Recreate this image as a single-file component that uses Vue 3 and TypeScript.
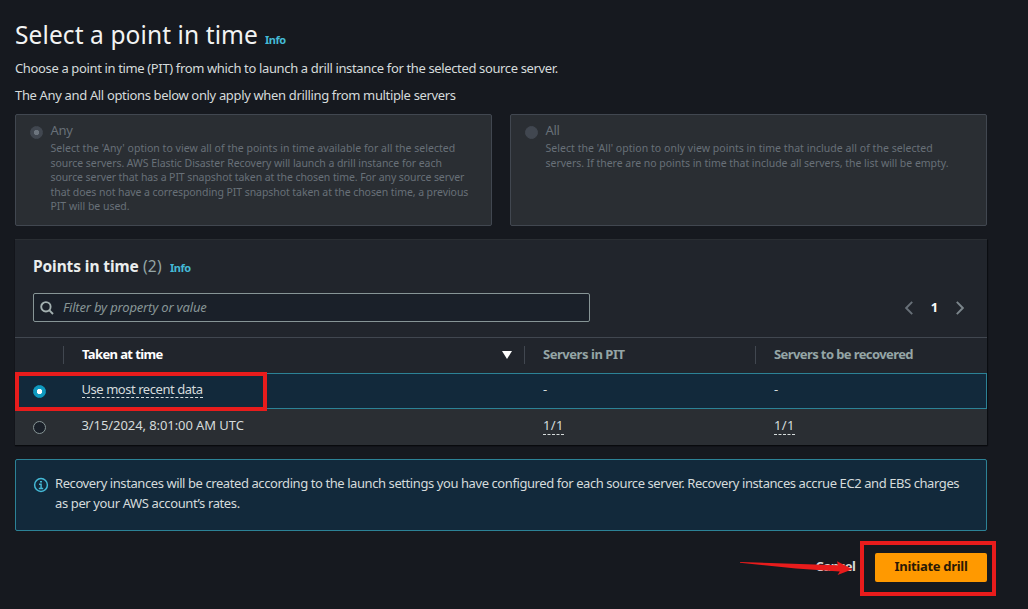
<script setup lang="ts">
interface Line {
  text: string
  tracking: number
}
interface Tile {
  id: string
  label: string
  checked: boolean
  lines: Line[]
}
interface Row {
  time: string
  inPit: string
  recovered: string
  selected: boolean
}

const tiles: Tile[] = [
  {
    id: 'any',
    label: 'Any',
    checked: true,
    lines: [
      { text: "Select the 'Any' option to view all of the points in time available for all the selected", tracking: 0.03 },
      { text: 'source servers. AWS Elastic Disaster Recovery will launch a drill instance for each', tracking: -0.05 },
      { text: 'source server that has a PIT snapshot taken at the chosen time. For any source server', tracking: -0.085 },
      { text: 'that does not have a corresponding PIT snapshot taken at the chosen time, a previous', tracking: -0.07 },
      { text: 'PIT will be used.', tracking: -0.02 },
    ],
  },
  {
    id: 'all',
    label: 'All',
    checked: false,
    lines: [
      { text: "Select the 'All' option to only view points in time that include all of the selected", tracking: 0.04 },
      { text: 'servers. If there are no points in time that include all servers, the list will be empty.', tracking: -0.03 },
    ],
  },
]

const rows: Row[] = [
  { time: 'Use most recent data', inPit: '-', recovered: '-', selected: true },
  { time: '3/15/2024, 8:01:00 AM UTC', inPit: '1/1', recovered: '1/1', selected: false },
]
</script>

<template>
  <main class="page">
    <header class="head">
      <h1><span class="title">Select a point in time</span><a class="info">Info</a></h1>
      <p class="lead">Choose a point in time (PIT) from which to launch a drill instance for the selected source server.</p>
      <p class="lead second">The Any and All options below only apply when drilling from multiple servers</p>
    </header>

    <section class="tiles">
      <div v-for="t in tiles" :key="t.id" class="tile">
        <span class="radio disabled" :class="{ checked: t.checked }"></span>
        <div class="tile-body">
          <div class="tile-label">{{ t.label }}</div>
          <div v-for="l in t.lines" :key="l.text" class="tile-line" :style="{ letterSpacing: l.tracking + 'px' }">{{ l.text }}</div>
        </div>
      </div>
    </section>

    <section class="panel">
      <h2><span class="ptitle">Points in time</span><span class="count">(2)</span><a class="info">Info</a></h2>
      <div class="tools">
        <div class="filter">
          <svg width="14" height="14" viewBox="0 0 14 14" fill="none" stroke="#a3b0b0" stroke-width="1.9">
            <circle cx="5.9" cy="5.8" r="4.7" /><path d="M9.2 9.2 13 13" />
          </svg>
          <span>Filter by property or value</span>
        </div>
        <nav class="pager">
          <svg width="8" height="14" viewBox="0 0 8 14" fill="none" stroke="#687078" stroke-width="1.9"><path d="M7.2 .8 1.2 7l6 6.2" /></svg>
          <b>1</b>
          <svg width="8" height="14" viewBox="0 0 8 14" fill="none" stroke="#7b858b" stroke-width="1.9"><path d="M.8 .8 6.8 7l-6 6.2" /></svg>
        </nav>
      </div>
      <div class="row thead">
        <span class="cell"></span>
        <span class="cell sorted"><span class="label h-time">Taken at time</span>
          <svg width="10" height="8" viewBox="0 0 10 8"><path d="M0 0h10L5 8z" fill="#fff" /></svg>
        </span>
        <span class="cell"><span class="label">Servers in PIT</span></span>
        <span class="cell"><span class="label h-rec">Servers to be recovered</span></span>
      </div>
      <div v-for="r in rows" :key="r.time" class="row data" :class="{ selected: r.selected }">
        <span class="cell pick"><span class="radio" :class="{ on: r.selected }"></span></span>
        <span class="cell"><span :class="r.selected ? 'dashed recent' : 'stamp'">{{ r.time }}</span></span>
        <span class="cell"><span :class="r.selected ? 'none' : 'dashed frac'">{{ r.inPit }}</span></span>
        <span class="cell"><span :class="r.selected ? 'none' : 'dashed frac'">{{ r.recovered }}</span></span>
        <i v-if="r.selected" class="mark mark-row"></i>
      </div>
    </section>

    <section class="alert">
      <svg width="16" height="16" viewBox="0 0 16 16" fill="none" stroke="#44b9d6">
        <circle cx="8" cy="8" r="6.4" stroke-width="1.5" />
        <path d="M7 4.7h2M6 7.3h2.1v4M5.8 11.5h4.4" stroke-width="1.4" />
      </svg>
      <div class="alert-text">
        <div>Recovery instances will be created according to the launch settings you have configured for each source server. Recovery instances accrue EC2 and EBS charges</div>
        <div class="alert-end">as per your AWS account’s rates.</div>
      </div>
    </section>

    <footer class="actions">
      <button class="cancel">Cancel</button>
      <div class="primary-wrap">
        <button class="primary">Initiate drill</button>
        <i class="mark mark-btn"></i>
      </div>
      <svg class="arrow" width="114" height="18" viewBox="0 0 114 18">
        <path d="M0 2 98 5.2 97 1.2 112.5 9.3 97.500 15 99.800 11.500 56 8.600 0 2.800z" fill="#e81c1c" />
      </svg>
    </footer>
  </main>
</template>

<style>
html, body { margin: 0; background: #16191f; overflow: hidden; }
</style>

<style scoped>
* { box-sizing: border-box; }
.page {
  width: 1028px; height: 609px; padding: 0 41px 0 15px; overflow: hidden;
  background: #16191f; color: #d5dbdb;
  font: 13px/20px "Noto Sans", "Open Sans", sans-serif;
  white-space: nowrap;
}
h1, h2, p { margin: 0; font-weight: 400; }
.head { height: 114px; padding-top: 18px; }
h1 { display: flex; align-items: baseline; height: 40px; line-height: 34px; color: #f2f3f3; }
.title { width: 250px; font-size: 24.5px; letter-spacing: 0.1px; }
.info { color: #44b9d6; font-size: 11px; font-weight: 700; letter-spacing: -0.5px; }
.lead { height: 27px; line-height: 20px; letter-spacing: -0.36px; }
.second { letter-spacing: -0.345px; }
.tiles { display: grid; grid-template-columns: 477px 477px; gap: 18px; height: 112px; }
.tile { display: flex; padding: 6px 0 0 14px; background: #2a2e33; border: 1px solid #414750; border-radius: 2px; color: #687078; }
.tile-body { margin-left: 7.5px; }
.tile-label { height: 20px; line-height: 18px; font-size: 13px; letter-spacing: -0.3px; }
.tile-line { height: 14.6px; line-height: 14.6px; font-size: 10.5px; }
.radio { flex: none; display: block; width: 13px; height: 13px; border-radius: 50%; border: 1px solid #879596; background: #1a2029; }
.radio.disabled { margin-top: 4.500px; border-color: #414750; background: #414750; }
.radio.checked { background: radial-gradient(circle, #6d757e 2.3px, #414750 3px); }
.radio.on { border-color: #0f9ac0; background: radial-gradient(circle, #fff 2.3px, #0f9ac0 3px); }
.panel { margin-top: 13px; height: 206px; background: #21252c; border-top: 1px solid #2a2e33; box-shadow: 0 1px 1px #080a0d, 1px 1px 1px #0c0f13; }
h2 { display: flex; align-items: baseline; padding: 14px 0 0 18px; height: 53px; line-height: 25px; font-size: 15.500px; }
.ptitle { width: 110px; color: #eaeded; font-weight: 700; letter-spacing: -0.1px; }
.count { width: 27px; color: #95a5a6; letter-spacing: 0.2px; }
.tools { display: flex; justify-content: space-between; height: 44px; padding: 0 23px 0 18px; }
.filter { display: flex; align-items: center; width: 557px; height: 29px; padding-left: 6px; border: 1px solid #879596; border-radius: 2px; background: #1a2029; color: #879596; font-style: italic; }
.filter span { margin-left: 9px; letter-spacing: -0.18px; line-height: 18px; margin-top: -2px; }
.pager { display: flex; align-items: center; height: 30px; color: #fafafa; }
.pager b { width: 43px; text-align: center; line-height: 18px; margin-top: -3px; }
.row { position: relative; display: grid; grid-template-columns: 48px 461px 231px 232px; height: 36px; }
.thead { padding-bottom: 1px; border-top: 1px solid #414750; color: #95a5a6; font-weight: 700; align-items: center; }
.thead .cell { height: 18px; line-height: 18px; border-left: 1px solid #414750; padding-left: 18px; letter-spacing: -0.46px; }
.thead .label { display: block; height: 18px; line-height: 16px; }
.thead .h-time { letter-spacing: -0.62px; }
.thead .h-rec { letter-spacing: -0.6px; }
.thead .cell:first-child { border: 0; padding: 0; }
.thead .sorted { display: flex; justify-content: space-between; align-items: center; padding-right: 12px; color: #fff; }
.data { background: #2a2e33; align-items: start; }
.data .cell { padding: 8px 0 0 19px; line-height: 17px; }
.data .cell:nth-child(2) { padding-left: 18.500px; }
.data .cell.pick { padding: 12px 0 0 18px; }
.selected { background: #12293b; box-shadow: inset 0 0 0 1px #2c8296; }
.dashed { display: inline-block; height: 17px; line-height: 17px; border-bottom: 1px dashed #d5dbdb; }
.recent { letter-spacing: -0.45px; }
.stamp { letter-spacing: -0.08px; }
.frac { height: 18px; letter-spacing: 0.4px; }
.alert { display: flex; margin-top: 14px; height: 72px; padding: 13px 0 0 17px; border: 1px solid #2c8296; border-radius: 2px; background: #12293b; }
.alert svg { margin-top: 4px; }
.alert-text { margin-left: 6px; letter-spacing: -0.42px; }
.alert-end { letter-spacing: -0.38px; }
.actions { position: relative; display: flex; justify-content: flex-end; align-items: flex-start; padding-top: 22px; }
button { border: 0; padding: 0; background: none; font: inherit; font-weight: 700; }
.cancel { width: 41px; margin-right: 19px; height: 29px; line-height: 18px; padding-bottom: 3px; color: #d5dbdb; letter-spacing: -0.5px; }
.primary-wrap { position: relative; width: 112px; height: 29px; }
.primary { display: block; width: 112px; height: 29px; line-height: 18px; padding-bottom: 3px; border-radius: 2px; background: #ff9900; color: #2b1905; letter-spacing: -0.3px; }
.mark { position: absolute; border: 4px solid #e81c1c; }
.mark-row { left: 0; top: -1px; width: 252px; height: 39px; z-index: 1; }
.mark-btn { left: -15px; top: -12px; width: 136px; height: 55px; }
.arrow { position: absolute; left: 725px; top: 29px; }
</style>
